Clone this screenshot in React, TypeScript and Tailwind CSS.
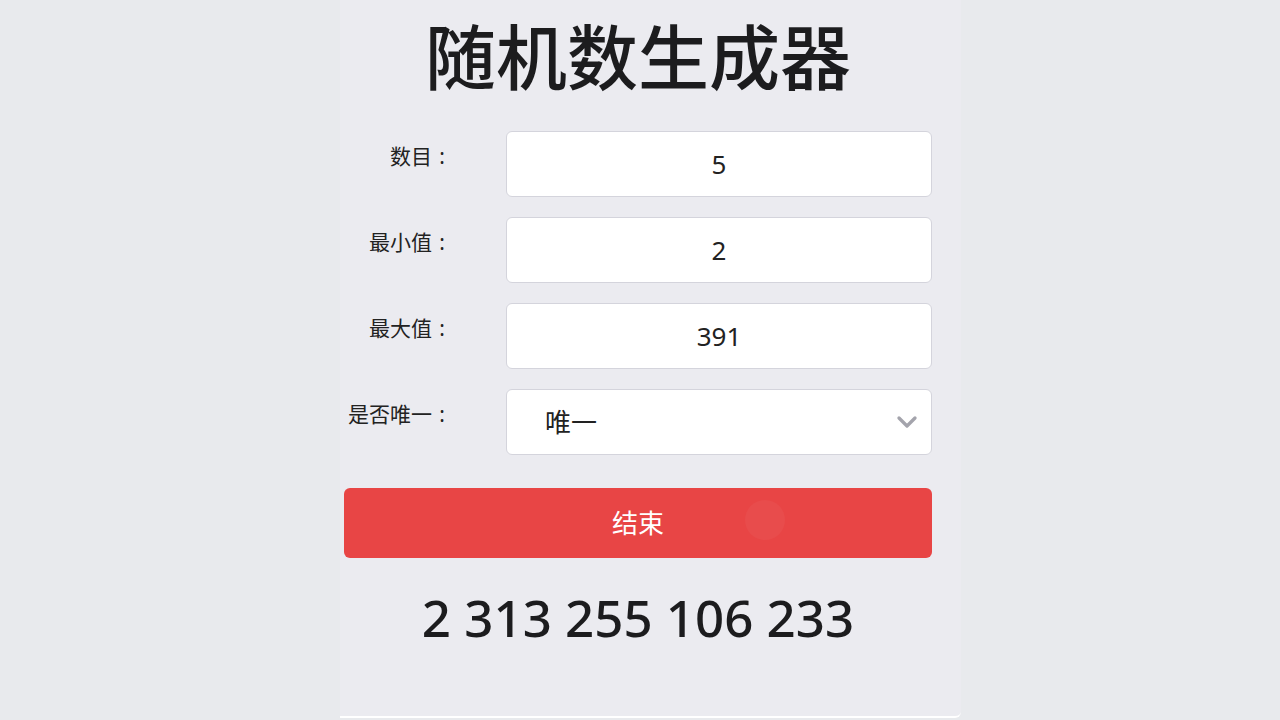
import { ChevronDown } from 'lucide-react';

const fields = [
  { label: '数目', value: '5' },
  { label: '最小值', value: '2' },
  { label: '最大值', value: '391' },
];

const font = { fontFamily: '"Noto Sans", "Noto Sans CJK SC", sans-serif' };

function Label({ text }: { text: string }) {
  return (
    <div className="w-[118px] pt-[11px] pr-[10px] text-right text-[21px] leading-7 text-[#222] whitespace-nowrap">
      {text}
      <span className="inline-block w-5 text-center">:</span>
    </div>
  );
}

export default function App() {
  return (
    <div className="w-[1280px] h-[720px] bg-[#e8eaed] pl-[340px] overflow-hidden" style={font}>
      <div className="w-[621px] h-[718px] bg-[#ebebf0] rounded-br-md border-b-2 border-white pl-1 pr-[29px]">
        <h1 className="pt-[16px] text-center text-[71px] leading-[82px] font-medium text-[#1c1c1e]">
          随机数生成器
        </h1>

        <div className="mt-[33px] flex flex-col gap-5">
          {fields.map((f) => (
            <div key={f.label} className="flex">
              <Label text={f.label} />
              <div className="ml-11 w-[426px] h-[66px] bg-white rounded-md border border-[#d4d4dc] flex items-center justify-center text-[26px] text-[#222]">
                {f.value}
              </div>
            </div>
          ))}
          <div className="flex">
            <Label text="是否唯一" />
            <div className="ml-11 w-[426px] h-[66px] bg-white rounded-md border border-[#d4d4dc] flex items-center justify-between pl-[38px] pr-2 text-[26px] text-[#222]">
              <span>唯一</span>
              <ChevronDown className="w-8 h-8 text-[#a4a4ac]" strokeWidth={2.5} />
            </div>
          </div>
        </div>

        <button className="mt-[33px] relative w-[588px] h-[70px] rounded-md bg-[#e84545] text-white text-[26px] flex items-center justify-center overflow-hidden">
          结束
          <span className="absolute left-[401px] top-[12px] w-10 h-10 rounded-full bg-white/[0.04]" />
        </button>

        <div className="mt-[27px] text-center text-[51px] leading-[64px] font-medium text-[#1c1c1e]">
          2 313 255 106 233
        </div>
      </div>
    </div>
  );
}
